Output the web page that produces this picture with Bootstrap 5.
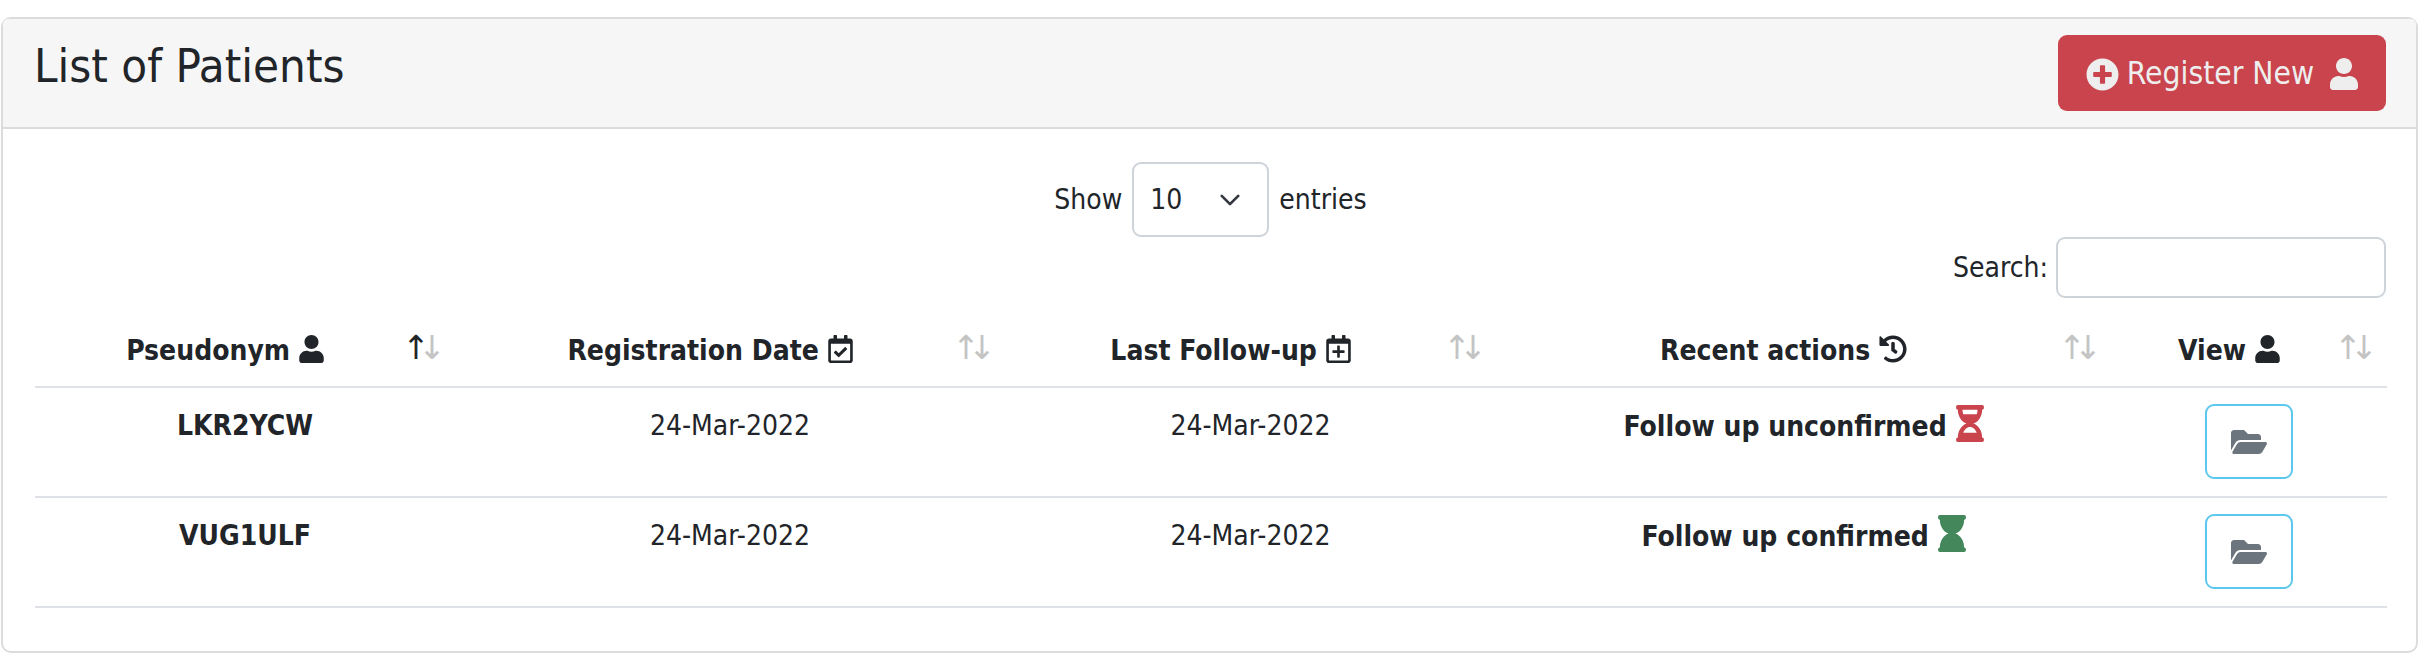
<!DOCTYPE html>
<html lang="en">
<head>
    <meta charset="UTF-8">
    <meta name="viewport" content="width=device-width, initial-scale=1.0">
    <title>List of Patients</title>
    <link href="https://cdn.jsdelivr.net/npm/bootstrap@5.3.0/dist/css/bootstrap.min.css" rel="stylesheet">
    <style>
        body { font-family: "DejaVu Sans Condensed", "DejaVu Sans", sans-serif; font-size: 28px; color: #212529; background: #fff; }
        .patients-card { margin: 17px 14px 0 1px; border: 2px solid #dcdcdc; border-radius: 10px; height: 636px; }
        .patients-head { background: #f6f6f6; border-bottom: 2px solid #dcdcdc; padding: 16px 30px 15px 31px; border-radius: 8px 8px 0 0; height: 110px; }
        .patients-head h3 { font-size: 47px; font-weight: 400; line-height: 56px; margin: 3px 0 0; }
        .btn-register { background: #c9444d; border: 0; border-radius: 9px; color: #eee; font-size: 31.5px; width: 328px; height: 76px; padding: 2px 0 0; }
        .btn-register:hover { background: #c9444d; color: #eee; }
        .patients-body { padding: 33px 30px 0 32px; }
        .len-row { gap: 10px; }
        .len-select { width: 137px; height: 75px; font-size: 28px; border: 2px solid #ced4da; border-radius: 9px; padding: 0 16px; background-size: 30px 22px; background-position: right 22px center; color: #212529; }
        .search-box { width: 330px; height: 61px; border: 2px solid #ced4da; border-radius: 9px; }
        .patients-table { table-layout: fixed; width: 100%; margin: 0; }
        .patients-table th, .patients-table td { border-bottom: 2px solid #dee2e6; text-align: center; color: #212529; }
        .patients-table th { position: relative; padding: 35px 40px 17px 0; line-height: 36px; font-weight: 700; }
        .patients-table td { height: 110px; vertical-align: top; line-height: 42px; padding: 17px 0 0; }
        .patients-table th::before, .patients-table th::after { position: absolute; bottom: 20px; font-family: "DejaVu Sans", sans-serif; font-weight: 400; font-size: 33px; line-height: 36px; color: #c4c4c4; }
        .patients-table th::before { content: "\2191"; right: 25px; }
        .patients-table th::after { content: "\2193"; right: 9px; }
        .patients-table th.sort-asc::before { color: #212529; }
        .col-a { width: 420px; }
        .col-b { width: 550px; }
        .col-c { width: 491px; }
        .col-d { width: 615px; }
        .col-e { width: 276px; }
        .ico { fill: currentColor; display: inline-block; }
        .ico-th { width: 25px; height: 28px; vertical-align: -3px; }
        .ico-hist { width: 28px; height: 28px; vertical-align: -3px; }
        .ico-glass { width: 28px; height: 37px; vertical-align: -6px; }
        .ico-plus { width: 33px; height: 33px; }
        .ico-user { width: 28px; height: 32px; }
        .ico-folder { width: 36px; height: 32px; color: #6c757d; }
        .btn-view { width: 88px; height: 75px; border: 2px solid #5cc8ee; border-radius: 9px; padding: 0; background: #fff; display: block; margin: -1px auto 0; }
        .btn-view:hover { border-color: #5cc8ee; background: #fff; }
        .c-red { color: #c9444d; }
        .c-green { color: #43875a; }
    </style>
</head>
<body>
    <svg class="d-none">
        <symbol id="i-user" viewBox="0 0 448 512"><path d="M224 256c70.7 0 128-57.3 128-128S294.7 0 224 0 96 57.3 96 128s57.3 128 128 128zm89.6 32h-16.7c-22.2 10.2-46.9 16-72.9 16s-50.6-5.8-72.9-16h-16.7C60.2 288 0 348.2 0 422.4V464c0 26.5 21.5 48 48 48h352c26.5 0 48-21.5 48-48v-41.6c0-74.2-60.2-134.4-134.4-134.4z"/></symbol>
        <symbol id="i-plus" viewBox="0 0 512 512"><path d="M256 8C119 8 8 119 8 256s111 248 248 248 248-111 248-248S393 8 256 8zm144 276c0 6.6-5.4 12-12 12h-92v92c0 6.6-5.4 12-12 12h-56c-6.6 0-12-5.4-12-12v-92h-92c-6.6 0-12-5.4-12-12v-56c0-6.6 5.4-12 12-12h92v-92c0-6.6 5.4-12 12-12h56c6.6 0 12 5.4 12 12v92h92c6.6 0 12 5.4 12 12v56z"/></symbol>
        <symbol id="i-folder" viewBox="0 0 576 512"><path d="M572.694 292.093L500.27 416.248A63.997 63.997 0 0 1 444.989 448H45.025c-18.523 0-30.064-20.093-20.731-36.093l72.424-124.155A64 64 0 0 1 152 256h399.964c18.523 0 30.064 20.093 20.73 36.093zM152 224h328v-48c0-26.51-21.49-48-48-48H272l-64-64H48C21.49 64 0 85.49 0 112v278.046l69.077-118.418C86.214 242.25 117.989 224 152 224z"/></symbol>
        <symbol id="i-glass-solid" viewBox="0 0 384 512"><path d="M360 64c13.255 0 24-10.745 24-24V24c0-13.255-10.745-24-24-24H24C10.745 0 0 10.745 0 24v16c0 13.255 10.745 24 24 24 0 90.965 51.016 167.734 120.842 192C75.016 280.266 24 357.035 24 448c-13.255 0-24 10.745-24 24v16c0 13.255 10.745 24 24 24h336c13.255 0 24-10.745 24-24v-16c0-13.255-10.745-24-24-24 0-90.965-51.016-167.734-120.842-192C308.984 231.734 360 154.965 360 64z"/></symbol>
        <symbol id="i-glass-half" viewBox="0 0 384 512"><path d="M360 0H24C10.745 0 0 10.745 0 24v16c0 13.255 10.745 24 24 24 0 90.965 51.016 167.734 120.842 192C75.016 280.266 24 357.035 24 448c-13.255 0-24 10.745-24 24v16c0 13.255 10.745 24 24 24h336c13.255 0 24-10.745 24-24v-16c0-13.255-10.745-24-24-24 0-90.965-51.016-167.734-120.842-192C308.984 231.734 360 154.965 360 64c13.255 0 24-10.745 24-24V24c0-13.255-10.745-24-24-24zm-75.078 384H99.08c17.059-46.797 52.096-80 92.92-80 40.821 0 75.862 33.196 92.922 80zm.019-256H99.078C91.988 108.548 88 86.748 88 64h208c0 22.805-3.987 44.587-11.059 64z"/></symbol>
        <symbol id="i-cal-check" viewBox="0 0 448 512"><path d="M400 64h-48V12c0-6.627-5.373-12-12-12h-40c-6.627 0-12 5.373-12 12v52H160V12c0-6.627-5.373-12-12-12h-40c-6.627 0-12 5.373-12 12v52H48C21.49 64 0 85.49 0 112v352c0 26.51 21.49 48 48 48h352c26.51 0 48-21.49 48-48V112c0-26.51-21.49-48-48-48zm-6 400H54a6 6 0 0 1-6-6V160h352v298a6 6 0 0 1-6 6zm-52.849-200.65L198.842 404.519c-4.705 4.667-12.303 4.637-16.971-.068l-75.091-75.699c-4.667-4.705-4.637-12.303.068-16.971l22.719-22.536c4.705-4.667 12.303-4.637 16.97.069l44.104 44.461 111.072-110.181c4.705-4.667 12.303-4.637 16.971.068l22.536 22.718c4.667 4.705 4.636 12.303-.069 16.97z"/></symbol>
        <symbol id="i-cal-plus" viewBox="0 0 448 512"><path d="M336 292v24c0 6.6-5.4 12-12 12h-76v76c0 6.6-5.4 12-12 12h-24c-6.6 0-12-5.4-12-12v-76h-76c-6.6 0-12-5.4-12-12v-24c0-6.6 5.4-12 12-12h76v-76c0-6.6 5.4-12 12-12h24c6.6 0 12 5.4 12 12v76h76c6.6 0 12 5.4 12 12zm112-180v352c0 26.5-21.5 48-48 48H48c-26.5 0-48-21.5-48-48V112c0-26.5 21.5-48 48-48h48V12c0-6.6 5.4-12 12-12h40c6.6 0 12 5.4 12 12v52h128V12c0-6.6 5.4-12 12-12h40c6.6 0 12 5.4 12 12v52h48c26.5 0 48 21.5 48 48zm-48 346V160H48v298c0 3.3 2.7 6 6 6h340c3.3 0 6-2.7 6-6z"/></symbol>
        <symbol id="i-history" viewBox="0 0 512 512"><path d="M504 255.531c.253 136.64-111.18 248.372-247.82 248.468-59.015.042-113.223-20.53-155.822-54.911-11.077-8.94-11.905-25.541-1.839-35.607l11.267-11.267c8.609-8.609 22.353-9.551 31.891-1.984C173.062 425.135 212.781 440 256 440c101.705 0 184-82.311 184-184 0-101.705-82.311-184-184-184-48.814 0-93.149 18.969-126.068 49.932l50.754 50.754c10.08 10.08 2.941 27.314-11.313 27.314H24c-8.837 0-16-7.163-16-16V38.627c0-14.254 17.234-21.393 27.314-11.314l49.372 49.372C129.209 34.136 189.552 8 256 8c136.81 0 247.747 110.78 248 247.531zm-180.912 78.784l9.823-12.63c8.138-10.463 6.253-25.542-4.21-33.679L288 256.349V152c0-13.255-10.745-24-24-24h-16c-13.255 0-24 10.745-24 24v135.651l65.409 50.874c10.463 8.137 25.541 6.253 33.679-4.21z"/></symbol>
    </svg>

    <div class="card patients-card">
        <div class="card-header patients-head d-flex justify-content-between align-items-start">
            <h3>List of Patients</h3>
            <a href="#" class="btn btn-register d-flex align-items-center justify-content-center gap-2">
                <svg class="ico ico-plus"><use href="#i-plus"/></svg>
                <span>Register New</span>
                <svg class="ico ico-user ms-2"><use href="#i-user"/></svg>
            </a>
        </div>
        <div class="card-body patients-body">
            <div class="d-flex justify-content-center align-items-center len-row">
                <label for="lenSelect">Show</label>
                <select id="lenSelect" class="form-select len-select">
                    <option>10</option>
                    <option>25</option>
                    <option>50</option>
                </select>
                <span>entries</span>
            </div>
            <div class="d-flex justify-content-end align-items-center gap-2">
                <label for="searchBox">Search:</label>
                <input id="searchBox" type="search" class="form-control search-box">
            </div>
            <table class="table patients-table">
                <colgroup>
                    <col class="col-a"><col class="col-b"><col class="col-c"><col class="col-d"><col class="col-e">
                </colgroup>
                <thead>
                    <tr>
                        <th class="sort-asc">Pseudonym <svg class="ico ico-th"><use href="#i-user"/></svg></th>
                        <th>Registration Date <svg class="ico ico-th"><use href="#i-cal-check"/></svg></th>
                        <th>Last Follow-up <svg class="ico ico-th"><use href="#i-cal-plus"/></svg></th>
                        <th>Recent actions <svg class="ico ico-hist"><use href="#i-history"/></svg></th>
                        <th>View <svg class="ico ico-th"><use href="#i-user"/></svg></th>
                    </tr>
                </thead>
                <tbody id="patientRows"></tbody>
            </table>
        </div>
    </div>

    <script src="https://cdn.jsdelivr.net/npm/bootstrap@5.3.0/dist/js/bootstrap.bundle.min.js"></script>
    <script>
        // Rows of the patient table
        const patients = [
            { code: 'LKR2YCW', date: '24-Mar-2022', last: '24-Mar-2022', action: 'Follow up unconfirmed', glass: 'i-glass-half', tone: 'c-red' },
            { code: 'VUG1ULF', date: '24-Mar-2022', last: '24-Mar-2022', action: 'Follow up confirmed', glass: 'i-glass-solid', tone: 'c-green' }
        ];
        let html = '';
        patients.forEach(p => {
            html += `
                <tr>
                    <td class="fw-bold">${p.code}</td>
                    <td>${p.date}</td>
                    <td>${p.last}</td>
                    <td class="fw-bold">${p.action} <svg class="ico ico-glass ${p.tone}"><use href="#${p.glass}"/></svg></td>
                    <td><button class="btn btn-view" aria-label="View"><svg class="ico ico-folder"><use href="#i-folder"/></svg></button></td>
                </tr>
            `;
        });
        document.getElementById('patientRows').innerHTML = html;
    </script>
</body>
</html>
